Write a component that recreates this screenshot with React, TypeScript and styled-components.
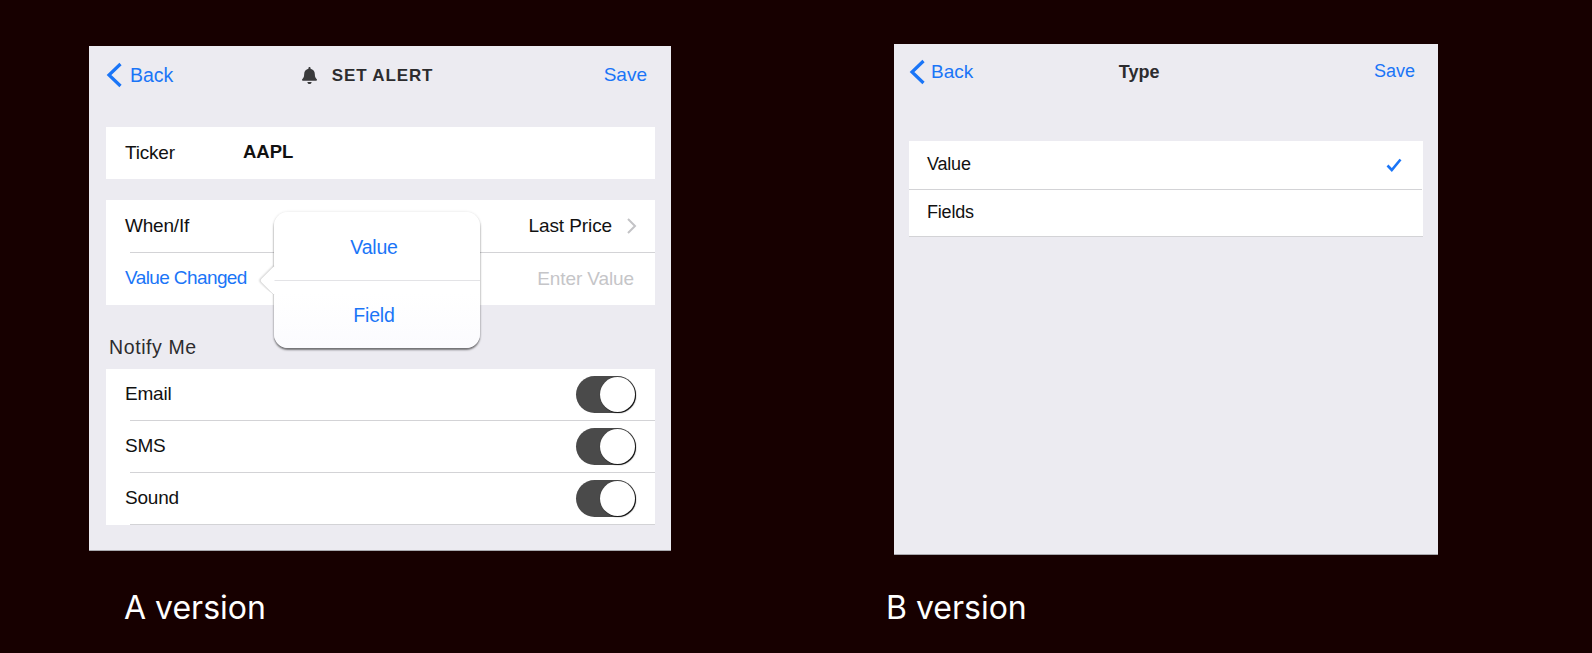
import React from 'react';
import styled, { createGlobalStyle } from 'styled-components';
import { FaBell } from 'react-icons/fa';

const BLUE = '#1a75f7';

const GlobalStyle = createGlobalStyle`
  html, body {
    margin: 0;
    padding: 0;
    background: #170000;
    font-family: "Liberation Sans", Arial, sans-serif;
  }
`;

const Page = styled.div`
  display: flex;
  width: 1592px;
  height: 653px;
  overflow: hidden;
  padding-left: 89px;
  box-sizing: border-box;
  gap: 223px;
`;

const Column = styled.div<{ $width: number; $top: number }>`
  display: flex;
  flex-direction: column;
  width: ${p => p.$width}px;
  padding-top: ${p => p.$top}px;
  box-sizing: border-box;
`;

const Screen = styled.div<{ $height: number; $left: number; $right: number }>`
  height: ${p => p.$height}px;
  background: #ecebf1;
  border-bottom: 1px solid #a9a9ae;
  box-sizing: border-box;
  padding: 0 ${p => p.$right}px 0 ${p => p.$left}px;
`;

const Nav = styled.div<{ $height: number; $gap: number; $right: number }>`
  display: flex;
  align-items: center;
  justify-content: space-between;
  height: ${p => p.$height}px;
  margin-bottom: ${p => p.$gap}px;
  padding-right: ${p => p.$right}px;
`;

const NavLink = styled.span<{ $gap?: number; $size?: number }>`
  display: flex;
  align-items: center;
  gap: ${p => p.$gap ?? 0}px;
  color: ${BLUE};
  font-size: ${p => p.$size ?? 19}px;
`;

const Title = styled.div<{ $shift: number; $size: number }>`
  display: flex;
  align-items: center;
  gap: 14px;
  margin-right: ${p => p.$shift}px;
  padding-top: 1px;
  color: #2c2c2e;
  font-size: ${p => p.$size}px;
  font-weight: 700;
`;

const Caps = styled.span`
  letter-spacing: 0.85px;
`;

const Card = styled.div<{ $gap?: number }>`
  position: relative;
  background: #fff;
  margin-bottom: ${p => p.$gap ?? 0}px;
`;

const Row = styled.div<{ $height?: number; $pad?: number; $end?: number; $size?: number }>`
  display: flex;
  align-items: center;
  justify-content: space-between;
  height: ${p => p.$height ?? 51}px;
  padding: 0 ${p => p.$end ?? 18}px 0 ${p => p.$pad ?? 19}px;
  font-size: ${p => p.$size ?? 19}px;
  letter-spacing: -0.2px;
  color: #111;
`;

const Separator = styled.div<{ $left?: number; $right?: number }>`
  height: 1px;
  margin-left: ${p => p.$left ?? 24}px;
  margin-right: ${p => p.$right ?? 0}px;
  background: #d3d3d6;
`;

const Label = styled.span<{ $width?: number; $lift?: number }>`
  width: ${p => (p.$width ? `${p.$width}px` : 'auto')};
  margin-top: ${p => p.$lift ?? 0}px;
`;

const LinkLabel = styled.span`
  color: ${BLUE};
  letter-spacing: -0.6px;
  margin-top: -2px;
`;

const Ticker = styled.span`
  flex: 1;
  font-size: 18.5px;
  font-weight: 700;
  letter-spacing: 0;
  margin-top: -2px;
`;

const Choice = styled.span`
  display: flex;
  align-items: center;
  gap: 14px;
  letter-spacing: -0.1px;
`;

const Placeholder = styled.span`
  color: #c5c5c8;
  margin-right: 3px;
  letter-spacing: -0.1px;
`;

const SectionLabel = styled.div`
  display: flex;
  align-items: flex-end;
  height: 64px;
  padding: 0 0 10px 3px;
  box-sizing: border-box;
  font-size: 19.5px;
  letter-spacing: 0.6px;
  color: #2c2c2e;
`;

const Popover = styled.div`
  position: absolute;
  top: 12px;
  left: 168px;
  width: 206px;
  height: 136px;
  display: flex;
  flex-direction: column;
  border-radius: 14px;
  background: linear-gradient(#ffffff, #ffffff 60%, #fbfbfe);
  box-shadow: 0 2px 2px rgba(0, 0, 0, 0.5), 0 0 3px rgba(0, 0, 0, 0.12);

  &::before {
    content: '';
    position: absolute;
    top: 58px;
    left: -10px;
    width: 21px;
    height: 21px;
    border-radius: 0 0 0 3px;
    background: #fff;
    transform: rotate(45deg);
    box-shadow: -1px 1px 2px rgba(0, 0, 0, 0.18);
    clip-path: polygon(-20% -20%, 100% 100%, -20% 120%);
  }
`;

const PopoverItem = styled.div`
  flex: 1;
  display: flex;
  align-items: center;
  justify-content: center;
  padding: 3px 6px 0 0;
  font-size: 19.5px;
  letter-spacing: -0.2px;
  color: ${BLUE};
`;

const PopoverRule = styled.div`
  height: 1px;
  background: #e3e3e6;
`;

const Toggle = styled.div`
  display: flex;
  justify-content: flex-end;
  align-items: center;
  width: 60px;
  height: 37px;
  margin-right: 1px;
  border-radius: 19px;
  background: #4a4a4a;
`;

const Knob = styled.div`
  width: 35px;
  height: 35px;
  border-radius: 50%;
  background: #fff;
  box-shadow: 1px 1px 1px #111, 0 0 1px #222;
  margin-right: 1px;
`;

const Caption = styled.div<{ $indent: number }>`
  margin-top: auto;
  margin-bottom: 27px;
  margin-left: ${p => p.$indent}px;
  color: #fff;
  font-family: Inter, sans-serif;
  font-size: 32px;
  line-height: 36px;
`;

const Back = ({ gap, size }: { gap: number; size?: number }) => (
  <NavLink $gap={gap} $size={size}>
    <svg width="17" height="26" viewBox="0 0 17 26" fill="none">
      <path d="M14.5 2 L3 13 L14.5 24" stroke={BLUE} strokeWidth="3.2" />
    </svg>
    Back
  </NavLink>
);

const Chevron = () => (
  <svg width="11" height="18" viewBox="0 0 11 18" fill="none">
    <path d="M2 2 L9 9 L2 16" stroke="#c3c3c6" strokeWidth="2" />
  </svg>
);

const Check = () => (
  <svg width="16" height="14" viewBox="0 0 16 14" fill="none">
    <path d="M1.5 7.5 L5.8 12 L14.5 1.5" stroke={BLUE} strokeWidth="2.6" />
  </svg>
);

const Switch = () => (
  <Toggle>
    <Knob />
  </Toggle>
);

const VersionA = () => (
  <Column $width={582} $top={46}>
    <Screen $height={505} $left={17} $right={16}>
      <Nav $height={58} $gap={23} $right={8}>
        <Back gap={7} size={19.5} />
        <Title $shift={43} $size={17}>
          <FaBell size={17} color="#3a3a3c" />
          <Caps>SET ALERT</Caps>
        </Title>
        <NavLink>Save</NavLink>
      </Nav>

      <Card $gap={21}>
        <Row $height={52}>
          <Label $width={118}>Ticker</Label>
          <Ticker>AAPL</Ticker>
        </Row>
      </Card>

      <Card>
        <Row $height={52}>
          <Label>When/If</Label>
          <Choice>
            Last Price
            <Chevron />
          </Choice>
        </Row>
        <Separator />
        <Row $height={52}>
          <LinkLabel>Value Changed</LinkLabel>
          <Placeholder>Enter Value</Placeholder>
        </Row>
        <Popover>
          <PopoverItem>Value</PopoverItem>
          <PopoverRule />
          <PopoverItem>Field</PopoverItem>
        </Popover>
      </Card>

      <SectionLabel>Notify Me</SectionLabel>

      <Card>
        {['Email', 'SMS', 'Sound'].map(name => (
          <React.Fragment key={name}>
            <Row>
              <Label $lift={-2}>{name}</Label>
              <Switch />
            </Row>
            <Separator />
          </React.Fragment>
        ))}
      </Card>
    </Screen>
    <Caption $indent={35}>A version</Caption>
  </Column>
);

const VersionB = () => (
  <Column $width={544} $top={44}>
    <Screen $height={511} $left={15} $right={15}>
      <Nav $height={55} $gap={42} $right={8}>
        <Back gap={5} />
        <Title $shift={69} $size={18}>Type</Title>
        <NavLink $size={18}>Save</NavLink>
      </Nav>

      <Card>
        <Row $height={48} $pad={18} $end={21} $size={18}>
          <Label $lift={-2}>Value</Label>
          <Check />
        </Row>
        <Separator $left={0} $right={1} />
        <Row $height={46} $pad={18} $size={18}>
          <Label $lift={-2}>Fields</Label>
        </Row>
        <Separator $left={0} />
      </Card>
    </Screen>
    <Caption $indent={-8}>B version</Caption>
  </Column>
);

export default function App() {
  return (
    <>
      <GlobalStyle />
      <Page>
        <VersionA />
        <VersionB />
      </Page>
    </>
  );
}
